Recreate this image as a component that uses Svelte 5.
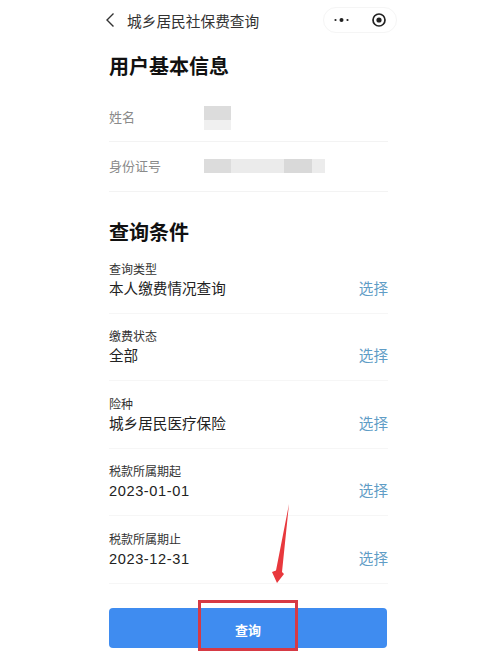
<script lang="ts">
	const conditions = [
		{ label: '查询类型', value: '本人缴费情况查询', date: false },
		{ label: '缴费状态', value: '全部', date: false },
		{ label: '险种', value: '城乡居民医疗保险', date: false },
		{ label: '税款所属期起', value: '2023-01-01', date: true },
		{ label: '税款所属期止', value: '2023-12-31', date: true }
	];
</script>

<div class="page">
	<header class="nav">
		<svg class="back" width="10" height="16" viewBox="0 0 10 16" fill="none">
			<path d="M8.5 1.5 L2 8 L8.5 14.5" stroke="#333" stroke-width="1.4" />
		</svg>
		<span class="nav-title">城乡居民社保费查询</span>
		<div class="capsule">
			<svg width="15" height="6" viewBox="0 0 15 6" fill="#222">
				<circle cx="1.5" cy="3" r="1.1" />
				<circle cx="7.5" cy="3" r="2" />
				<circle cx="13.5" cy="3" r="1.1" />
			</svg>
			<svg width="14" height="14" viewBox="0 0 14 14">
				<circle cx="7" cy="7" r="6" fill="none" stroke="#222" stroke-width="1.7" />
				<circle cx="7" cy="7" r="2.6" fill="#222" />
			</svg>
		</div>
	</header>

	<main class="content">
		<h2 class="first">用户基本信息</h2>
		<div class="info-row">
			<span class="info-label">姓名</span>
			<div class="blur name-blur"></div>
		</div>
		<div class="info-row id-row">
			<span class="info-label">身份证号</span>
			<div class="blur id-blur"></div>
		</div>

		<h2 class="second">查询条件</h2>
		{#each conditions as item}
			<div class="cond-row">
				<div class="cond-text">
					<div class="cond-label">{item.label}</div>
					<div class="cond-value" class:date={item.date}>{item.value}</div>
				</div>
				<span class="pick">选择</span>
			</div>
		{/each}

		<button class="submit">查询</button>
	</main>

	<!-- red annotations on top of the screenshot -->
	<svg class="arrow" width="24" height="82" viewBox="0 0 24 82">
		<path d="M20 1 L13 69 L15 71 L8 80 L3 69 L7 67.5 Z" fill="#e8383d" />
	</svg>
	<div class="red-box"></div>
</div>

<style>
	:global(body) {
		margin: 0;
		background: #fff;
	}

	.page {
		position: relative;
		width: 500px;
		height: 651px;
		overflow: hidden;
		background: #fff;
		font-family: 'Liberation Sans', 'Noto Sans CJK SC', sans-serif;
		color: #1c1c1c;
	}

	.nav {
		display: flex;
		align-items: center;
		height: 40px;
		padding: 0 103px 0 105px;
	}

	.back {
		margin-right: 12px;
	}

	.nav-title {
		flex: 1;
		font-size: 14.7px;
		color: #333;
	}

	.capsule {
		display: flex;
		align-items: center;
		justify-content: space-between;
		box-sizing: border-box;
		width: 74px;
		height: 26px;
		padding: 0 10px;
		border: 1px solid #f5f5f5;
		border-radius: 13px;
	}

	.content {
		margin: 0 112px 0 109px;
	}

	h2 {
		margin: 0;
		font-size: 20px;
		line-height: 26px;
		font-weight: 700;
		color: #111;
	}

	.first {
		margin-top: 14px;
		margin-bottom: 12px;
	}

	.second {
		margin-top: 28px;
	}

	.info-row {
		display: flex;
		align-items: center;
		height: 49px;
		border-bottom: 1px solid #f3f3f3;
	}

	.id-row {
		height: 47px;
		padding-bottom: 2px;
	}

	.info-label {
		width: 95px;
		font-size: 13px;
		color: #8a8a8a;
	}

	.blur {
		background: #e6e6e6;
	}

	.name-blur {
		width: 27px;
		height: 24px;
		margin-top: 2px;
		background: linear-gradient(#dcdcdc 0 58%, #f0f0f0 58%);
	}

	.id-blur {
		width: 121px;
		height: 14px;
		background: linear-gradient(90deg, #dcdcdc 0 22%, #ebebeb 22% 66%, #d9d9d9 66% 89%, #ececec 89%);
	}

	.cond-row {
		display: flex;
		align-items: flex-end;
		justify-content: space-between;
		box-sizing: border-box;
		height: 67.5px;
		padding-bottom: 14px;
		border-bottom: 1px solid #f6f6f6;
	}

	.cond-label {
		font-size: 12px;
		line-height: 17px;
		color: #333;
	}

	.cond-value {
		font-size: 14.6px;
		line-height: 20px;
		color: #222;
	}

	.date {
		letter-spacing: 0.6px;
	}

	.pick {
		font-size: 14.6px;
		line-height: 20px;
		color: #5f9dc6;
	}

	.submit {
		display: block;
		width: 278px;
		height: 40px;
		margin-top: 24.5px;
		padding: 3px 0 0;
		border: none;
		border-radius: 4px;
		background: #3f8cf0;
		color: #fff;
		font-family: inherit;
		font-size: 13px;
		font-weight: 700;
	}

	.arrow {
		position: absolute;
		left: 269px;
		top: 503px;
	}

	.red-box {
		position: absolute;
		left: 198px;
		top: 600px;
		box-sizing: border-box;
		width: 100px;
		height: 51px;
		border: 3px solid #d63a45;
	}
</style>
